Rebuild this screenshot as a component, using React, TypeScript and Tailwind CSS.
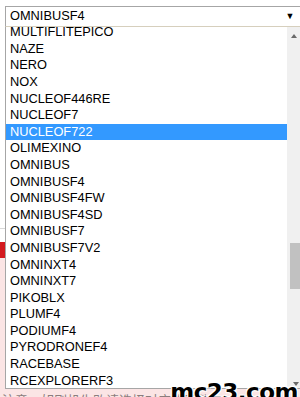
import React from 'react';

const boards = [
  'MULTIFLITEPICO',
  'NAZE',
  'NERO',
  'NOX',
  'NUCLEOF446RE',
  'NUCLEOF7',
  'NUCLEOF722',
  'OLIMEXINO',
  'OMNIBUS',
  'OMNIBUSF4',
  'OMNIBUSF4FW',
  'OMNIBUSF4SD',
  'OMNIBUSF7',
  'OMNIBUSF7V2',
  'OMNINXT4',
  'OMNINXT7',
  'PIKOBLX',
  'PLUMF4',
  'PODIUMF4',
  'PYRODRONEF4',
  'RACEBASE',
  'RCEXPLORERF3',
];

const selected = 'NUCLEOF722';

export default function App() {
  return (
    <div
      className="relative w-[300px] h-[397px] overflow-hidden bg-white text-black"
      style={{ fontFamily: '"Liberation Sans", Arial, sans-serif' }}
    >
      {/* Page behind the open select */}
      <div className="flex flex-col h-full">
        <div className="pt-[6px] pl-[5px]">
          <div className="flex items-center h-[21px] border border-[#a6a6a6] border-b-[#d6cfbd] border-r-0 bg-white pl-[4px] text-[12.8px] leading-none">
            <span className="flex-1">OMNIBUSF4</span>
            <span className="w-[16px] text-[9px] mr-[2px] text-center">▼</span>
          </div>
        </div>
        <div className="h-[202px] border-b border-[#d8d8d8]" />
        <div className="h-[13px]" />
        <div className="h-[16px] bg-[#d31a1f]" />
        <div className="flex-1 bg-[#fbe5e5] flex flex-col justify-end">
          <div
            className="h-[8px] overflow-hidden pl-[2px] text-[13px] leading-[16px] text-[#8c7d7d] whitespace-nowrap"
            style={{ fontFamily: '"Liberation Sans", "Noto Sans CJK SC", sans-serif' }}
          >
            <div className="mt-[4px]">注意：如刷机失败请选择对应的固件</div>
          </div>
        </div>
      </div>

      {/* Dropdown list overlay */}
      <div className="absolute left-[5px] top-[27px] w-[295px] h-[362px] flex bg-white border-l border-b border-[#a6a6a6] overflow-hidden">
        <div className="w-[281px] -mt-[2.8px] text-[12.8px] leading-[16.6px]">
          {boards.map((b) => (
            <div
              key={b}
              className={
                b === selected
                  ? 'h-[16.6px] pl-[4px] bg-[#3399ff] text-white'
                  : 'h-[16.6px] pl-[4px]'
              }
            >
              {b}
            </div>
          ))}
        </div>
        <div className="relative flex-1 bg-[#f0f0f0]">
          <svg className="absolute left-[4px] top-[7px]" width="6" height="4" viewBox="0 0 6 4">
            <path d="M3 0 L6 4 L0 4 Z" fill="#6a6a6a" />
          </svg>
          <div className="absolute left-[3px] top-[216px] w-[12px] h-[46px] bg-[#c1c1c1]" />
          <svg className="absolute left-[6px] top-[355px]" width="6" height="4" viewBox="0 0 6 4">
            <path d="M0 0 L6 0 L3 4 Z" fill="#6a6a6a" />
          </svg>
        </div>
      </div>

      {/* Watermark */}
      <div
        className="absolute right-[2px] bottom-[-7px] text-[23px] font-black tracking-[-0.5px] text-black leading-none"
        style={{
          fontFamily: '"DejaVu Sans", sans-serif',
          textShadow: '1px 1px 0 #fff, -1px -1px 0 #fff, 1px -1px 0 #fff, -1px 1px 0 #fff',
        }}
      >
        mc23.com
      </div>
    </div>
  );
}
